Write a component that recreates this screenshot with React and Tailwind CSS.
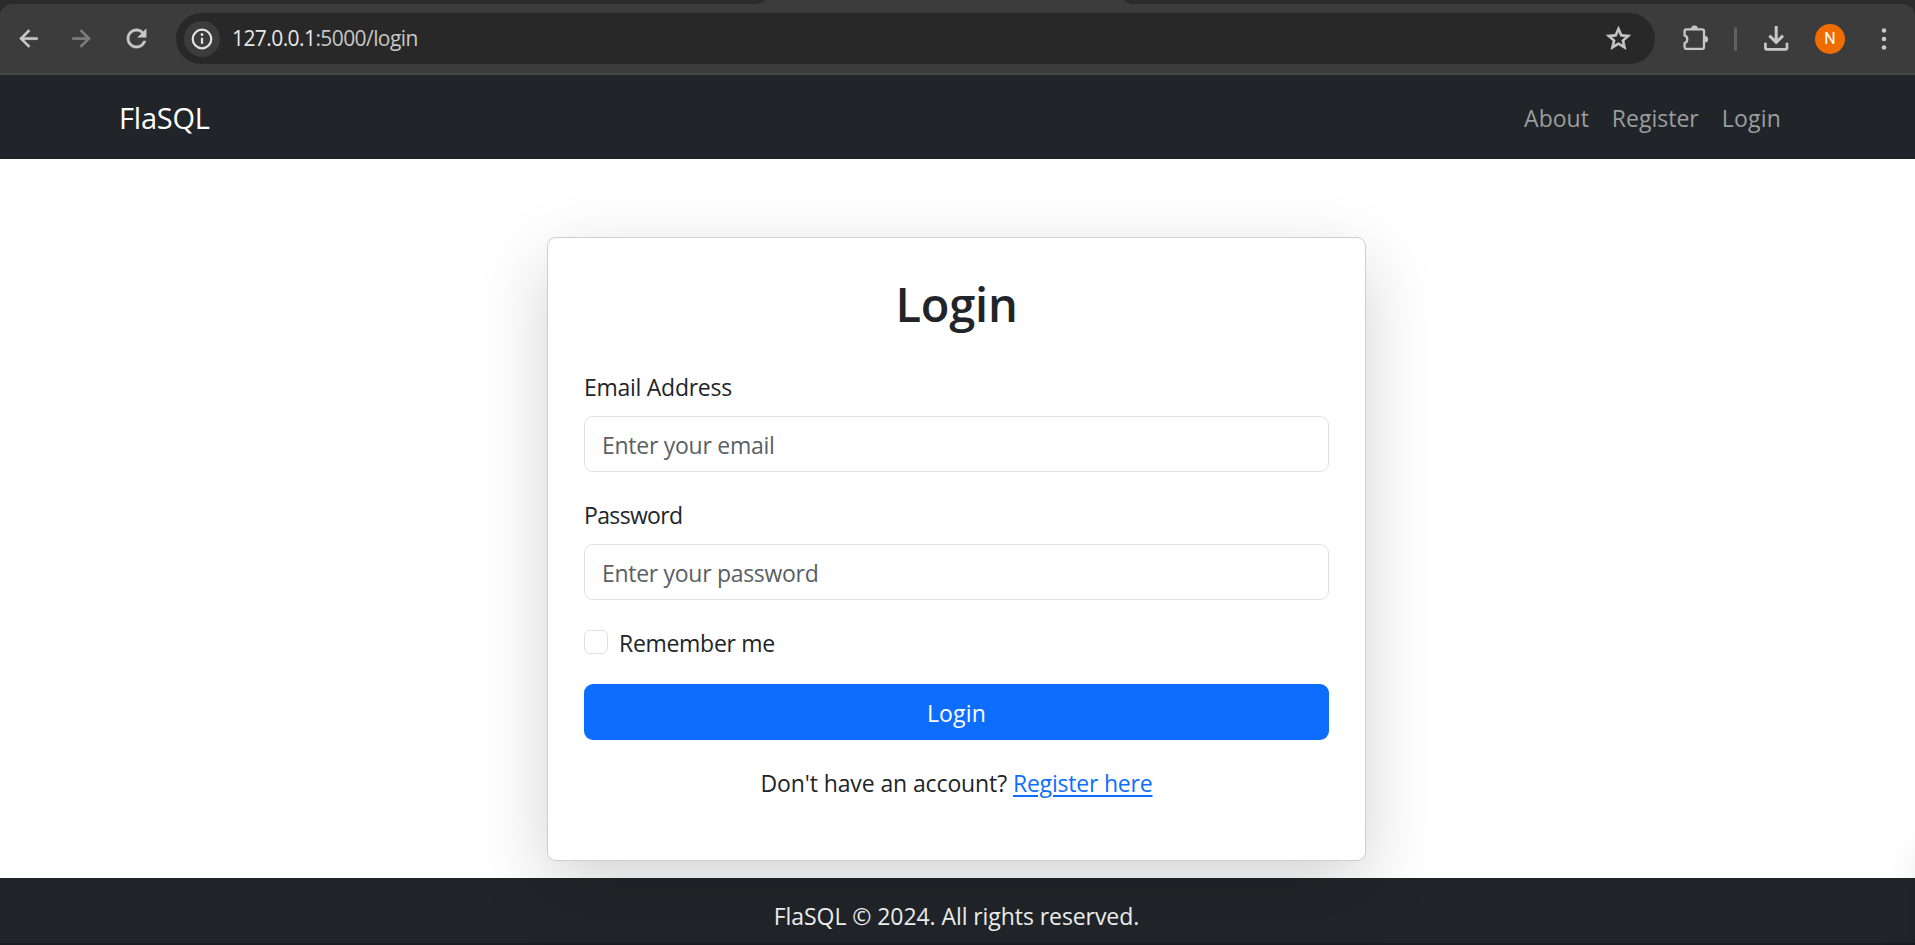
function BackIcon() {
  return (
    <svg className="size-[27px]" viewBox="0 0 24 24" fill="#c7c7c7" stroke="#c7c7c7" strokeWidth="0.5">
      <path d="M20 11H7.83l5.59-5.59L12 4l-8 8 8 8 1.41-1.41L7.83 13H20v-2z" />
    </svg>
  );
}

function ForwardIcon() {
  return (
    <svg className="ml-[26px] size-[27px]" viewBox="0 0 24 24" fill="#7c7c7c" stroke="#7c7c7c" strokeWidth="0.5">
      <path d="M12 4l-1.41 1.41L16.17 11H4v2h12.17l-5.58 5.59L12 20l8-8z" />
    </svg>
  );
}

function ReloadIcon() {
  return (
    <svg className="ml-[27px] size-[29px]" viewBox="0 0 24 24" fill="#c7c7c7" stroke="#c7c7c7" strokeWidth="0.4">
      <path d="M17.65 6.35C16.2 4.9 14.21 4 12 4c-4.42 0-7.99 3.58-7.99 8s3.57 8 7.99 8c3.73 0 6.84-2.55 7.73-6h-2.08c-.82 2.33-3.04 4-5.65 4-3.31 0-6-2.69-6-6s2.69-6 6-6c1.66 0 3.14.69 4.22 1.78L13 11h7V4l-2.35 2.35z" />
    </svg>
  );
}

function BrowserBar() {
  return (
    <div className="h-[75px] bg-[#2b2b2b]">
      <div className="flex h-1 justify-center pr-[26px]">
        <svg className="h-1 w-[378px]" viewBox="0 0 378 4" fill="#3c3c3c">
          <path d="M0 4C4 4 7 2 10 0H367C370 2 373 4 378 4Z" />
        </svg>
      </div>
      <div className="flex h-[71px] items-center rounded-t-xl border-b-2 border-[#474747] bg-[#3c3c3c] pl-[15px]">
        <BackIcon />
        <ForwardIcon />
        <ReloadIcon />
        <div className="ml-[25px] flex h-[51px] w-[1479px] items-center rounded-full bg-[#282828] pr-[22px] pl-2">
          <div className="flex size-[36px] items-center justify-center rounded-full bg-[#3c3c3c]">
            <svg className="mr-px size-[22px]" viewBox="0 0 22 22" fill="none">
              <circle cx="11" cy="11" r="9.3" stroke="#e3e3e3" strokeWidth="2.2" />
              <path d="M11 9.8v6" stroke="#e3e3e3" strokeWidth="2.2" />
              <circle cx="11" cy="6.6" r="1.4" fill="#e3e3e3" />
            </svg>
          </div>
          <span className="ml-3 flex-1 text-[21px] leading-none tracking-[-0.58px] text-[#c7c7c7]">
            <span className="text-[#e8e8e8]">127.0.0.1</span>:5000/login
          </span>
          <svg className="size-[29px]" viewBox="0 0 24 24" fill="#c7c7c7" stroke="#c7c7c7" strokeWidth="0.6">
            <path d="M22 9.24l-7.19-.62L12 2 9.19 8.63 2 9.24l5.46 4.73L5.82 21 12 17.27 18.18 21l-1.63-7.03L22 9.24zM12 15.4l-3.76 2.27 1-4.28-3.32-2.88 4.38-.38L12 6.1l1.71 4.04 4.38.38-3.32 2.88 1 4.28L12 15.4z" />
          </svg>
        </div>
        <svg className="mb-0.5 ml-[27px] size-[28px]" viewBox="0 0 28 28">
          <path
            d="M4.2 5.4H20.4a1.6 1.6 0 0 1 1.6 1.6V23.2a1.6 1.6 0 0 1-1.6 1.6H4a1.6 1.6 0 0 1-1.4-1.6V19C4 18.6 5.3 17.2 5.3 15.2S4 11.8 2.6 11.4V7A1.6 1.6 0 0 1 4.2 5.4Z"
            fill="none"
            stroke="#c7c7c7"
            strokeWidth="2.3"
          />
          <path d="M9.2 4.8a3.3 3.3 0 0 1 6.6 0ZM22.8 12a3.3 3.3 0 0 1 0 6.6Z" fill="#c7c7c7" />
        </svg>
        <div className="ml-6 h-6 w-[3px] rounded-full bg-[#606060]" />
        <svg className="ml-[27px] size-[25px]" viewBox="0 0 25 25" fill="none" stroke="#c7c7c7">
          <path d="M12.2 0V15.5M5.4 9.6L12.2 16.4L19 9.6" strokeWidth="3" />
          <path d="M1.4 16.8V22a1.4 1.4 0 0 0 1.4 1.4H21.6A1.4 1.4 0 0 0 23 22V16.8" strokeWidth="2.7" />
        </svg>
        <div className="ml-[26px] flex size-[30px] items-center justify-center rounded-full bg-[#ef6c00] font-[Roboto] text-[16px] leading-none font-normal text-white">
          N
        </div>
        <svg className="ml-9 h-[24px] w-[6px]" viewBox="0 0 6 24" fill="#c7c7c7">
          <circle cx="3" cy="3.5" r="2.3" />
          <circle cx="3" cy="12" r="2.3" />
          <circle cx="3" cy="20.5" r="2.3" />
        </svg>
      </div>
    </div>
  );
}

function Navbar() {
  return (
    <nav className="flex h-[84px] items-center justify-between bg-[#212529] pr-[134px] pl-[119px] leading-none">
      <a className="text-[29px] tracking-[-0.2px] text-white">FlaSQL</a>
      <div className="flex gap-[23px] pt-0.5 text-[#9b9d9f]">
        <a>About</a>
        <a>Register</a>
        <a className="tracking-[0.2px]">Login</a>
      </div>
    </nav>
  );
}

function EmailField() {
  return (
    <label className="block">
      <span className="block leading-9 tracking-[-0.27px]">Email Address</span>
      <input
        type="email"
        placeholder="Enter your email"
        className="mt-[11px] block h-14 w-full rounded-[9px] border border-[#dee2e6] px-[17px] pt-0.5 tracking-[-0.27px] placeholder:text-[#595f64]"
      />
    </label>
  );
}

function PasswordField() {
  return (
    <label className="mt-[25px] block">
      <span className="block leading-9 tracking-[-0.65px]">Password</span>
      <input
        type="password"
        placeholder="Enter your password"
        className="mt-[11px] block h-14 w-full rounded-[9px] border border-[#dee2e6] px-[17px] pt-0.5 tracking-[-0.3px] placeholder:text-[#595f64]"
      />
    </label>
  );
}

function LoginCard() {
  return (
    <div className="relative h-[624px] w-[819px] rounded-[9px] border border-[#cfcfcf] bg-white px-9 pt-9 shadow-[0_24px_72px_rgba(0,0,0,0.175)]">
      <h1 className="text-center text-[47px] leading-[60px] font-semibold tracking-[-0.2px]">Login</h1>
      <form className="mt-[35px]">
        <EmailField />
        <PasswordField />
        <label className="mt-[25px] mb-[23px] flex h-9 items-center gap-[11px]">
          <input type="checkbox" className="mb-0.5 size-6 appearance-none rounded-[6px] border border-[#dee2e6]" />
          <span className="tracking-[-0.3px]">Remember me</span>
        </label>
        <button
          type="button"
          className="block h-14 w-full rounded-[9px] bg-[#0d6efd] pt-0.5 tracking-[0.2px] text-white"
        >
          Login
        </button>
      </form>
      <p className="mt-[25px] text-center leading-9 tracking-[-0.11px]">
        Don't have an account?{" "}
        <a className="tracking-[-0.2px] text-[#0d6efd] underline decoration-2 underline-offset-[3px]">Register here</a>
      </p>
    </div>
  );
}

export default function App() {
  return (
    <div className="relative flex h-[945px] w-[1915px] flex-col overflow-hidden bg-white font-['Open_Sans',sans-serif] text-[23px] text-[#212529]">
      <BrowserBar />
      <Navbar />
      <main className="flex h-[719px] justify-center pt-[78px] pr-[2px]">
        <LoginCard />
      </main>
      <footer className="flex h-[67px] justify-center border-b-2 border-[#1b1d22] bg-[#212529] pt-5 pr-[2px] text-[#f2f3f4]">
        <p className="leading-9 tracking-[-0.07px]">FlaSQL © 2024. All rights reserved.</p>
      </footer>
      <div className="absolute top-[850px] left-full h-[200px] w-10 shadow-[0_0_36px_rgba(0,0,0,0.08)]" />
    </div>
  );
}
